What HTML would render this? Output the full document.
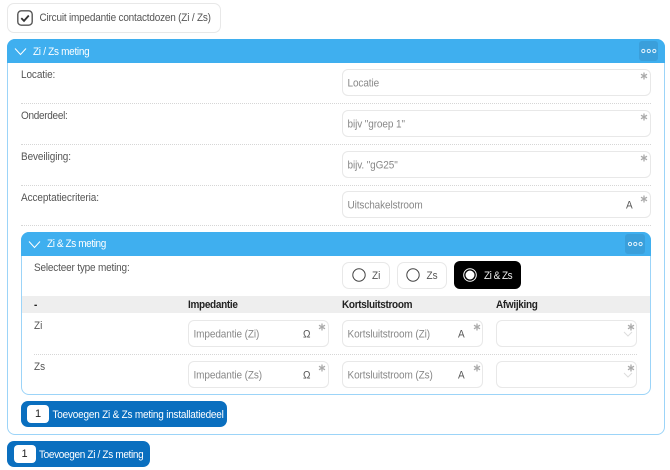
<!DOCTYPE html>
<html><head><meta charset="utf-8">
<style>
html,body{margin:0;padding:0;background:#fff}
#p{position:relative;width:670px;height:470px;overflow:hidden;font-family:"Liberation Sans",sans-serif;font-size:10px;color:#555;background:#fff}
#p div,#p svg{position:absolute;box-sizing:border-box}
.t{white-space:nowrap;line-height:14px;height:14px;transform:scaleY(1.12)}
.in{border:1px solid #e8e8e8;border-radius:6px;background:#fff}
.ph{color:#888;white-space:nowrap;line-height:14px;height:14px;letter-spacing:-.1px;transform:translateY(-.5px) scaleY(1.12)}
.d{height:0;border-top:1px dotted #d6d6d6}
.hd{background:#3fafef;border-radius:8px 8px 0 0}
.hdt{color:#fff;white-space:nowrap;line-height:14px;height:14px;transform:scaleY(1.12)}
.mb{background:#3a9fdb;border-radius:3px}
.b{font-weight:bold;color:#222;white-space:nowrap;line-height:14px;height:14px;letter-spacing:-.32px;transform:scaleY(1.12)}
.u{color:#555;line-height:14px;height:14px;transform:translateY(-.5px) scaleY(1.12)}
.btn{background:#0a6fbf;border-radius:7px}
.n{background:#fff;border-radius:4px;color:#222;text-align:center;font-size:11px}
.w{color:#fff;white-space:nowrap;line-height:14px;height:14px;transform:scaleY(1.12)}
.ast path{fill:none;stroke:#aaa;stroke-width:1.3}
</style></head><body><div id="p">

<div class="in" style="left:7px;top:3px;width:214px;height:30px;border-radius:7px"></div>
<svg style="left:17px;top:9.500px" width="16" height="16" viewBox="0 0 16 16"><rect x=".8" y=".8" width="14.400" height="14.400" rx="3.500" fill="#fff" stroke="#555" stroke-width="1.400"/><path d="M4.300 8.100l2.700 2.800 4.800-5.400" fill="none" stroke="#333" stroke-width="1.800"/></svg>
<div class="t" style="left:39.500px;top:12px;letter-spacing:-.2px">Circuit impedantie contactdozen (Zi / Zs)</div>

<div style="left:7px;top:39px;width:658px;height:396px;border:1px solid #9cd4f8;border-radius:8px"></div>
<div class="hd" style="left:7px;top:39px;width:658px;height:24px"></div>
<svg style="left:14px;top:47px" width="13" height="9" viewBox="0 0 13 9"><path d="M1 1.500l5.500 6 5.500-6" fill="none" stroke="#fff" stroke-width="1"/></svg>
<div class="hdt" style="left:33px;top:45.500px;letter-spacing:-.3px">Zi / Zs meting</div>
<div class="mb" style="left:639px;top:41px;width:19px;height:20px"></div>
<svg style="left:640px;top:47px" width="18" height="8" viewBox="0 0 18 8"><g fill="none" stroke="#e4f3fc" stroke-width="1"><circle cx="3.300" cy="4" r="1.600"/><circle cx="8.800" cy="4" r="1.600"/><circle cx="14.300" cy="4" r="1.600"/></g></svg>

<div class="t" style="left:21px;top:69px;letter-spacing:-.1px">Locatie:</div>
<div class="in" style="left:342px;top:69px;width:309px;height:27px"></div>
<div class="ph" style="left:347.500px;top:77.500px">Locatie</div>
<svg class="ast" style="left:640px;top:72px" width="8" height="8" viewBox="0 0 8 8"><path d="M4 .5v7M1 2.200l6 3.600M7 2.200L1 5.800"/></svg>
<div class="d" style="left:21px;top:103px;width:630px"></div>

<div class="t" style="left:21px;top:110px;letter-spacing:-.3px">Onderdeel:</div>
<div class="in" style="left:342px;top:110px;width:309px;height:27px"></div>
<div class="ph" style="left:347.500px;top:118.500px">bijv "groep 1"</div>
<svg class="ast" style="left:640px;top:113px" width="8" height="8" viewBox="0 0 8 8"><path d="M4 .5v7M1 2.200l6 3.600M7 2.200L1 5.800"/></svg>
<div class="d" style="left:21px;top:144px;width:630px"></div>

<div class="t" style="left:21px;top:151px;letter-spacing:-.1px">Beveiliging:</div>
<div class="in" style="left:342px;top:151px;width:309px;height:27px"></div>
<div class="ph" style="left:347.500px;top:159.500px">bijv. "gG25"</div>
<svg class="ast" style="left:640px;top:154px" width="8" height="8" viewBox="0 0 8 8"><path d="M4 .5v7M1 2.200l6 3.600M7 2.200L1 5.800"/></svg>
<div class="d" style="left:21px;top:185px;width:630px"></div>

<div class="t" style="left:21px;top:192px;letter-spacing:-.08px">Acceptatiecriteria:</div>
<div class="in" style="left:342px;top:191px;width:309px;height:27px"></div>
<div class="ph" style="left:347.500px;top:199.500px">Uitschakelstroom</div>
<div class="u" style="left:626px;top:199.500px">A</div>
<svg class="ast" style="left:640px;top:195px" width="8" height="8" viewBox="0 0 8 8"><path d="M4 .5v7M1 2.200l6 3.600M7 2.200L1 5.800"/></svg>
<div class="d" style="left:21px;top:225px;width:630px"></div>

<div style="left:21px;top:232px;width:630px;height:163px;border:1px solid #9cd4f8;border-radius:8px"></div>
<div class="hd" style="left:21px;top:232px;width:630px;height:24px"></div>
<svg style="left:28px;top:240px" width="13" height="9" viewBox="0 0 13 9"><path d="M1 1.500l5.500 6 5.500-6" fill="none" stroke="#fff" stroke-width="1"/></svg>
<div class="hdt" style="left:47px;top:238px;letter-spacing:-.4px">Zi &amp; Zs meting</div>
<div class="mb" style="left:625px;top:234px;width:20px;height:20px"></div>
<svg style="left:626px;top:240px" width="18" height="8" viewBox="0 0 18 8"><g fill="none" stroke="#e4f3fc" stroke-width="1"><circle cx="4" cy="4" r="1.600"/><circle cx="9.300" cy="4" r="1.600"/><circle cx="14.600" cy="4" r="1.600"/></g></svg>

<div class="t" style="left:34px;top:262px;letter-spacing:-.18px">Selecteer type meting:</div>

<div class="in" style="left:342px;top:262px;width:48px;height:27px;border-radius:7px"></div>
<svg style="left:351px;top:267px" width="16" height="16" viewBox="0 0 16 16"><circle cx="8" cy="8" r="6.200" fill="#fff" stroke="#444" stroke-width="1"/></svg>
<div class="t" style="left:372px;top:269.500px">Zi</div>
<div class="in" style="left:397px;top:262px;width:50px;height:27px;border-radius:7px"></div>
<svg style="left:405px;top:267px" width="16" height="16" viewBox="0 0 16 16"><circle cx="8" cy="8" r="6.200" fill="#fff" stroke="#444" stroke-width="1"/></svg>
<div class="t" style="left:426.500px;top:269.500px">Zs</div>
<div style="left:454px;top:261px;width:67px;height:28px;background:#000;border-radius:6px"></div>
<svg style="left:462px;top:267px" width="16" height="16" viewBox="0 0 16 16"><circle cx="8" cy="8" r="6.300" fill="none" stroke="#fff" stroke-width="1"/><circle cx="8" cy="8" r="4.500" fill="#fff"/></svg>
<div class="t" style="left:484px;top:269.500px;color:#eee;letter-spacing:-.5px">Zi &amp; Zs</div>

<div style="left:22px;top:296px;width:628px;height:17px;background:#eee"></div>
<div class="b" style="left:34px;top:299px">-</div>
<div class="b" style="left:188px;top:299px">Impedantie</div>
<div class="b" style="left:342px;top:299px">Kortsluitstroom</div>
<div class="b" style="left:496px;top:299px">Afwijking</div>

<div class="t" style="left:34px;top:320px">Zi</div>
<div class="in" style="left:188px;top:320px;width:141px;height:27px"></div>
<div class="ph" style="left:193.500px;top:328.500px">Impedantie (Zi)</div>
<div class="u" style="left:303px;top:328.500px">Ω</div>
<svg class="ast" style="left:318px;top:323px" width="8" height="8" viewBox="0 0 8 8"><path d="M4 .5v7M1 2.200l6 3.600M7 2.200L1 5.800"/></svg>
<div class="in" style="left:342px;top:320px;width:141px;height:27px"></div>
<div class="ph" style="left:347.500px;top:328.500px">Kortsluitstroom (Zi)</div>
<div class="u" style="left:458px;top:328.500px">A</div>
<svg class="ast" style="left:473px;top:323px" width="8" height="8" viewBox="0 0 8 8"><path d="M4 .5v7M1 2.200l6 3.600M7 2.200L1 5.800"/></svg>
<div class="in" style="left:496px;top:320px;width:141px;height:27px"></div>
<svg style="left:623px;top:331px" width="10" height="6" viewBox="0 0 10 6"><path d="M1 1l4 4 4-4" fill="none" stroke="#ddd" stroke-width="1"/></svg>
<svg class="ast" style="left:627px;top:323px" width="8" height="8" viewBox="0 0 8 8"><path d="M4 .5v7M1 2.200l6 3.600M7 2.200L1 5.800"/></svg>
<div class="d" style="left:34px;top:354px;width:603px"></div>

<div class="t" style="left:34px;top:361px">Zs</div>
<div class="in" style="left:188px;top:361px;width:141px;height:27px"></div>
<div class="ph" style="left:193.500px;top:369.500px">Impedantie (Zs)</div>
<div class="u" style="left:303px;top:369.500px">Ω</div>
<svg class="ast" style="left:318px;top:364px" width="8" height="8" viewBox="0 0 8 8"><path d="M4 .5v7M1 2.200l6 3.600M7 2.200L1 5.800"/></svg>
<div class="in" style="left:342px;top:361px;width:141px;height:27px"></div>
<div class="ph" style="left:347.500px;top:369.500px">Kortsluitstroom (Zs)</div>
<div class="u" style="left:458px;top:369.500px">A</div>
<svg class="ast" style="left:473px;top:364px" width="8" height="8" viewBox="0 0 8 8"><path d="M4 .5v7M1 2.200l6 3.600M7 2.200L1 5.800"/></svg>
<div class="in" style="left:496px;top:361px;width:141px;height:27px"></div>
<svg style="left:623px;top:372px" width="10" height="6" viewBox="0 0 10 6"><path d="M1 1l4 4 4-4" fill="none" stroke="#ddd" stroke-width="1"/></svg>
<svg class="ast" style="left:627px;top:364px" width="8" height="8" viewBox="0 0 8 8"><path d="M4 .5v7M1 2.200l6 3.600M7 2.200L1 5.800"/></svg>

<div class="btn" style="left:21px;top:401px;width:206px;height:26px"></div>
<div class="n" style="left:27px;top:405px;width:22px;height:18px;line-height:18px">1</div>
<div class="w" style="left:52.500px;top:409px;letter-spacing:-.21px">Toevoegen Zi &amp; Zs meting installatiedeel</div>

<div class="btn" style="left:7px;top:441px;width:143px;height:26px"></div>
<div class="n" style="left:13.500px;top:445px;width:22px;height:18px;line-height:18px">1</div>
<div class="w" style="left:39px;top:448.500px;letter-spacing:-.33px">Toevoegen Zi / Zs meting</div>

</div></body></html>
